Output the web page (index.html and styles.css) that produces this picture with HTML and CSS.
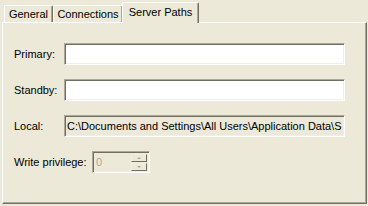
FILE: index.html
```html
<!DOCTYPE html>
<html lang="en">
<head>
    <meta charset="UTF-8">
    <title>Server Paths</title>
    <link rel="stylesheet" href="styles.css">
</head>
<body>
    <div class="dialog">
        <div class="tabs">
            <div class="tab tab-general">General</div>
            <div class="tab tab-connections">Connections</div>
            <div class="tab tab-paths active">Server Paths</div>
        </div>

        <div class="panel">
            <div class="row">
                <label class="label">Primary:</label>
                <input class="field" type="text">
            </div>
            <div class="row">
                <label class="label">Standby:</label>
                <input class="field" type="text">
            </div>
            <div class="row">
                <label class="label">Local:</label>
                <div class="field readonly">C:\Documents and Settings\All Users\Application Data\S</div>
            </div>
            <div class="row">
                <label class="label wide">Write privilege:</label>
                <div class="spinner">
                    <span class="spin-value">0</span>
                    <div class="spin-buttons">
                        <div class="spin-btn"><span class="arrow up"></span></div>
                        <div class="spin-btn"><span class="arrow down"></span></div>
                    </div>
                </div>
            </div>
        </div>
    </div>
</body>
</html>
```

FILE: styles.css
```css
body {
    margin: 0;
    width: 368px;
    height: 206px;
    overflow: hidden;
    background-color: #ece9d8;
    color: black;
    font-family: "Liberation Sans", Arial, sans-serif;
    font-size: 11px;
}

.dialog {
    padding: 2px 1px 2px 2px;
}

.tabs {
    display: flex;
    align-items: flex-end;
    height: 20px;
    padding-left: 2px;
    position: relative;
    z-index: 1;
}

.tab {
    box-sizing: border-box;
    height: 17px;
    line-height: 16px;
    padding: 0;
    text-align: center;
    white-space: nowrap;
    border-top: 1px solid white;
    border-left: 1px solid white;
    border-right: 1px solid #716f64;
    border-radius: 2px 2px 0 0;
    box-shadow: inset -1px 0 #aca899;
    background-color: #ece9d8;
}

.tab-general {
    width: 49px;
}

.tab-connections {
    width: 70px;
}

.tab.active {
    width: 77px;
    height: 21px;
    line-height: 19px;
    margin: 0 0 -1px -1px;
}

.panel {
    height: 160px;
    padding: 20px 0 0 11px;
    border: 1px solid;
    border-color: white #716f64 #716f64 white;
    box-shadow: inset -1px -1px #aca899;
}

.row {
    display: flex;
    align-items: center;
    height: 22px;
    margin-bottom: 14px;
}

.label {
    width: 50px;
    flex-shrink: 0;
}

.label.wide {
    width: 78px;
}

.field {
    box-sizing: border-box;
    width: 281px;
    height: 22px;
    margin: 0;
    padding: 0 2px;
    border: 1px solid;
    border-color: #aca899 white white #aca899;
    box-shadow: inset 1px 1px #716f64, inset -1px -1px #f1efe2;
    background-color: white;
    font: inherit;
    outline: none;
}

.field.readonly {
    background-color: #ece9d8;
    line-height: 20px;
    white-space: nowrap;
    overflow: hidden;
}

.spinner {
    box-sizing: border-box;
    display: flex;
    align-items: center;
    justify-content: space-between;
    width: 58px;
    height: 22px;
    padding: 0 2px 0 3px;
    border: 1px solid;
    border-color: #aca899 white white #aca899;
    box-shadow: inset 1px 1px #716f64, inset -1px -1px #f1efe2;
}

.spin-value {
    color: #aca899;
}

.spin-buttons {
    display: flex;
    flex-direction: column;
    gap: 1px;
}

.spin-btn {
    box-sizing: border-box;
    display: flex;
    align-items: center;
    justify-content: center;
    width: 16px;
    height: 8px;
    border: 1px solid;
    border-color: #f1efe2 #716f64 #716f64 #f1efe2;
    background-color: #ece9d8;
}

.arrow {
    width: 0;
    height: 0;
    border-left: 2px solid transparent;
    border-right: 2px solid transparent;
}

.arrow.up {
    border-bottom: 2px solid #aca899;
}

.arrow.down {
    border-top: 2px solid #aca899;
}
```
